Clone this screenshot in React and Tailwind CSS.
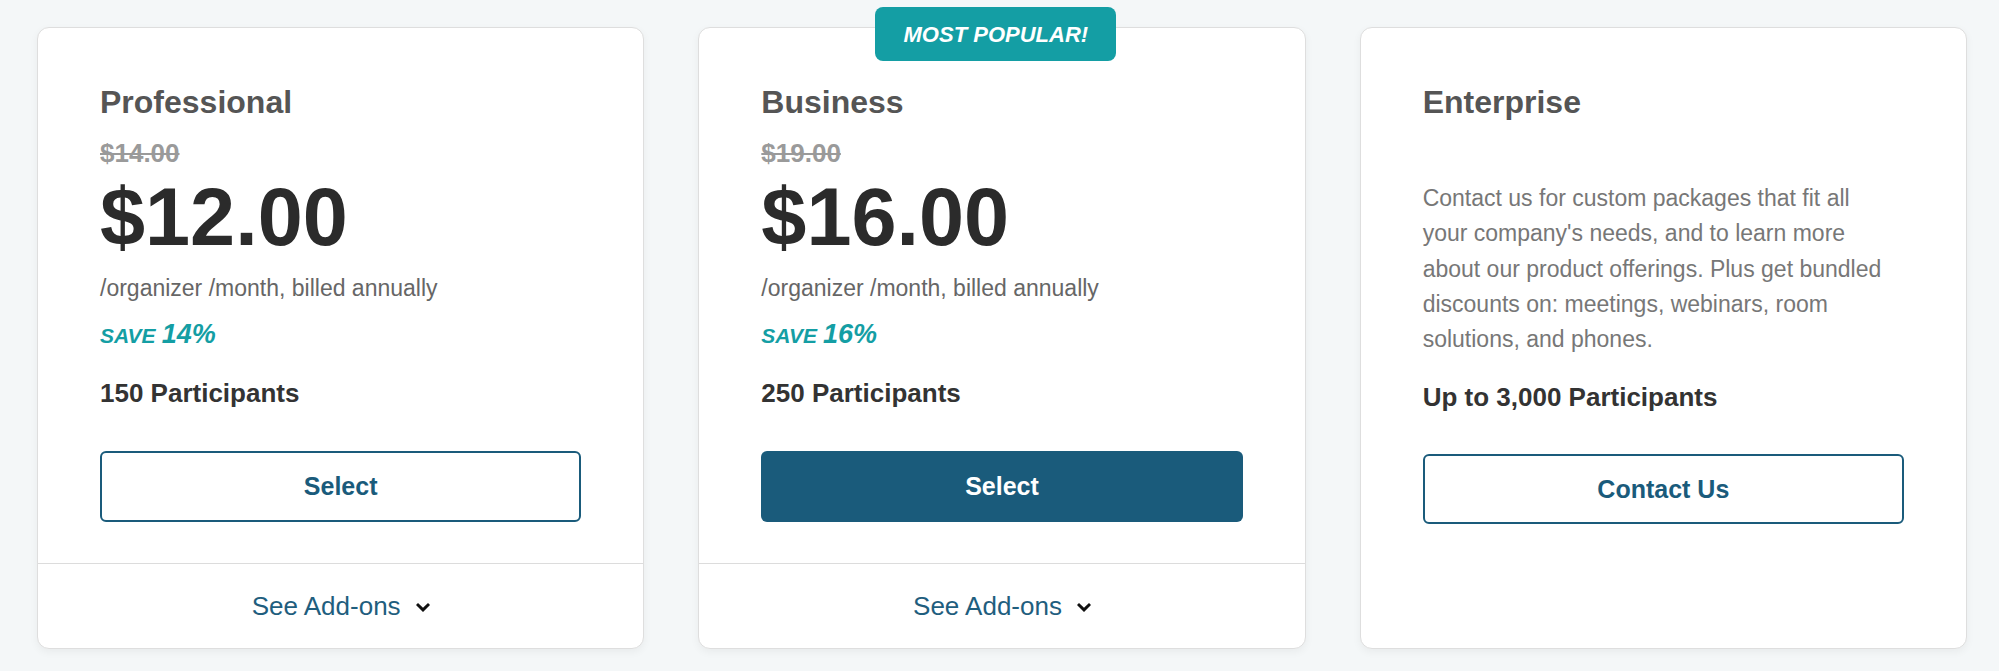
import React from 'react'

const plans = [
  { name: 'Professional', was: '$14.00', price: '$12.00', save: '14%', people: '150 Participants', featured: false },
  { name: 'Business', was: '$19.00', price: '$16.00', save: '16%', people: '250 Participants', featured: true },
]

function Chevron() {
  return (
    <svg width="14" height="9" viewBox="0 0 14 9" className="ml-[15px] mt-[2px]">
      <path d="M0 2 L2 0 L7 4.8 L12 0 L14 2 L7 9 Z" fill="#111" />
    </svg>
  )
}

function PlanCard({ plan }) {
  return (
    <div className="relative flex h-[622px] flex-col rounded-[12px] border border-[#dedede] bg-white shadow-[0_3px_8px_rgba(0,0,0,0.05)]">
      {plan.featured && (
        <div className="absolute left-[176px] top-[-21px] flex h-[54px] w-[241px] items-center justify-center rounded-[8px] bg-[#149ea4]">
          <span className="text-[22px] font-bold italic text-white">MOST POPULAR!</span>
        </div>
      )}

      <div className="flex flex-1 flex-col px-[62px] pt-[58px]">
        <h3 className="text-[32px] font-bold leading-none text-[#555]">{plan.name}</h3>
        <p className="mt-[22px] text-[26px] font-bold leading-none text-[#9a9a9a] line-through">{plan.was}</p>
        <p className="mt-[11px] text-[81px] font-bold leading-none text-[#2b2b2b]">{plan.price}</p>
        <p className="mt-[19px] text-[23px] leading-none text-[#666]">/organizer /month, billed annually</p>
        <p className="mt-[21px] flex items-baseline gap-[6px] font-bold italic leading-none text-[#149ea4]">
          <span className="text-[21px]">SAVE</span>
          <span className="text-[27px]">{plan.save}</span>
        </p>
        <p className="mt-[32px] text-[26px] font-bold leading-none text-[#333]">{plan.people}</p>
        <button
          className={
            plan.featured
              ? 'mt-[45px] h-[71px] w-full rounded-[6px] bg-[#1a5b7b] text-[25px] font-bold text-white'
              : 'mt-[45px] h-[71px] w-full rounded-[6px] border-2 border-[#1a5b7b] bg-white text-[25px] font-bold text-[#1a5b7b]'
          }
        >
          Select
        </button>
      </div>

      <div className="flex h-[85px] items-center justify-center border-t border-[#dcdcdc]">
        <span className="text-[26px] leading-none text-[#1f5e7e]">See Add-ons</span>
        <Chevron />
      </div>
    </div>
  )
}

function EnterpriseCard() {
  return (
    <div className="flex h-[622px] flex-col rounded-[12px] border border-[#dedede] bg-white px-[62px] pt-[58px] shadow-[0_3px_8px_rgba(0,0,0,0.05)]">
      <h3 className="text-[32px] font-bold leading-none text-[#555]">Enterprise</h3>
      <p className="mt-[63px] max-w-[475px] text-[23px] leading-[35.3px] text-[#777]">
        Contact us for custom packages that fit all your company's needs, and to learn more about our product offerings. Plus get bundled discounts on: meetings, webinars, room solutions, and phones.
      </p>
      <p className="mt-[27px] text-[26px] font-bold leading-none text-[#333]">Up to 3,000 Participants</p>
      <button className="mt-[44px] h-[70px] w-full rounded-[6px] border-2 border-[#1a5b7b] bg-white text-[25px] font-bold text-[#1a5b7b]">
        Contact Us
      </button>
    </div>
  )
}

export default function App() {
  return (
    <div className="min-h-screen bg-[#f4f7f8] pl-[37px] pr-[32px] pt-[27px] font-['Liberation_Sans',Arial,sans-serif]">
      <div className="grid grid-cols-3 gap-[54px]">
        {plans.map((p) => (
          <PlanCard key={p.name} plan={p} />
        ))}
        <EnterpriseCard />
      </div>
    </div>
  )
}
